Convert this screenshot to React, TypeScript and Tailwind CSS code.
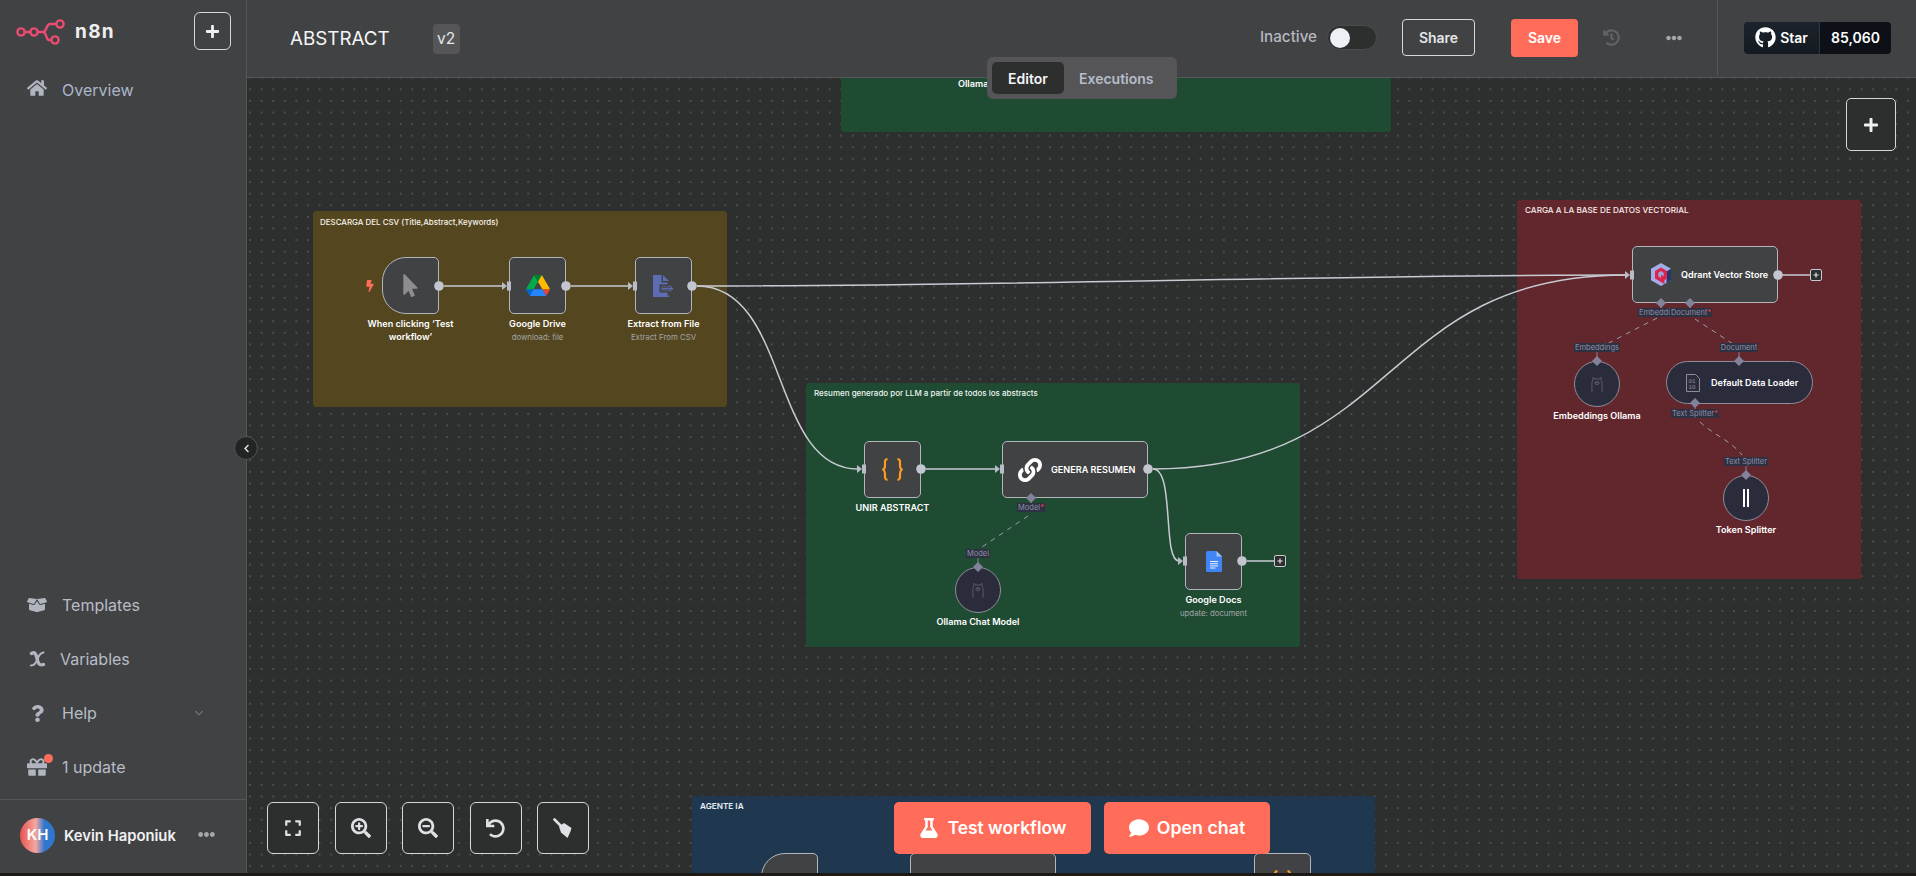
import React from "react";
import {
  FaHome, FaBoxOpen, FaQuestion, FaGift, FaEllipsisH, FaExpand, FaSearchPlus, FaSearchMinus,
  FaUndo, FaFlask, FaComment, FaMousePointer, FaBolt, FaLink, FaHistory, FaPlus, FaGithub, FaChevronLeft,
} from "react-icons/fa";
import { ChevronDown } from "lucide-react";

function Logo() {
  return (
    <svg width="50" height="28" viewBox="15 18 50 28" fill="none" stroke="#ea4b71" strokeWidth="2.4" className="shrink-0">
      <circle cx="21" cy="32" r="3.6" />
      <circle cx="34" cy="32" r="3.6" />
      <circle cx="60" cy="24" r="3.6" />
      <circle cx="55" cy="40" r="3.6" />
      <path d="M24.6 32h5.8M37.6 32h5.4c4 0 3-8 7-8h6.4M43 32c4 0 2.500 8 6 8h2.400" />
    </svg>
  );
}

function VariableIcon() {
  return (
    <svg width="17" height="18" viewBox="0 0 17 18" fill="none" stroke="#b0b5bf" strokeLinecap="round">
      <path d="M2.500 3.500C6 1.500 7 4 8 8.500S10 16 14.500 14.500" strokeWidth="3.400" />
      <path d="M14.500 2.500C11 3 9.500 6 8.500 9S6 15.500 2 15.500" strokeWidth="2.200" />
    </svg>
  );
}

function BroomIcon() {
  return (
    <svg width="20" height="21" viewBox="0 0 20 21" fill="currentColor">
      <path d="M1.500 1.500L8.500 8.500" fill="none" stroke="currentColor" strokeWidth="2.600" strokeLinecap="round" />
      <path d="M6 8.500L11 5L18.500 10L17.500 13.500L14.500 20L8 14.500z" />
    </svg>
  );
}

function DriveIcon() {
  return (
    <svg width="24" height="21" viewBox="0 0 87.300 78">
      <path d="m6.600 66.850 3.850 6.650c.8 1.400 1.950 2.500 3.300 3.300l13.750-23.800h-27.500c0 1.550.4 3.100 1.200 4.500z" fill="#0066da" />
      <path d="m43.650 25-13.750-23.800c-1.350.8-2.500 1.900-3.300 3.300l-25.400 44a9.060 9.060 0 0 0 -1.200 4.500h27.500z" fill="#00ac47" />
      <path d="m73.550 76.800c1.350-.8 2.500-1.900 3.300-3.300l1.600-2.750 7.650-13.250c.8-1.400 1.200-2.950 1.200-4.500h-27.502l5.852 11.500z" fill="#ea4335" />
      <path d="m43.650 25 13.750-23.800c-1.350-.8-2.900-1.200-4.500-1.200h-18.500c-1.600 0-3.150.45-4.500 1.200z" fill="#00832d" />
      <path d="m59.800 53h-32.300l-13.750 23.800c1.350.8 2.900 1.200 4.500 1.200h50.800c1.600 0 3.150-.45 4.500-1.200z" fill="#2684fc" />
      <path d="m73.400 26.500-12.700-22c-.8-1.400-1.950-2.500-3.300-3.300l-13.750 23.800 16.150 28h27.450c0-1.550-.4-3.100-1.200-4.500z" fill="#ffba00" />
    </svg>
  );
}

function ExtractIcon() {
  return (
    <svg width="24" height="22" viewBox="0 0 24 22" className="ml-[1px]">
      <path d="M1 0h8.500v7.500H17V22H1z" fill="#5d6db3" />
      <path d="M11 0L17 6H11z" fill="#5d6db3" />
      <path d="M8.500 10.500H16.500V8L23 13.500 16.500 19V16.500H8.500z" fill="#5d6db3" stroke="#414244" strokeWidth="2" />
      <path d="M10 12.500H19M10 14.700H19" stroke="#414244" strokeWidth="0.8" />
    </svg>
  );
}

function DocsIcon() {
  return (
    <svg width="16" height="21" viewBox="0 0 16 21">
      <path d="M1.500 0H10.500L16 5.500V19.500a1.500 1.500 0 0 1-1.500 1.500h-13A1.500 1.500 0 0 1 0 19.500V1.500A1.500 1.500 0 0 1 1.500 0z" fill="#4285f4" />
      <path d="M10.500 0L16 5.500H10.500z" fill="#a1c2fa" />
      <path d="M4 10.500h8M4 12.700h8M4 14.900h8M4 17h5.500" stroke="#fff" strokeWidth="0.9" />
    </svg>
  );
}

function QdrantIcon() {
  return (
    <svg width="20" height="23" viewBox="0 0 20 23">
      <path d="M10 0L20 5.750V17.250L10 23L0 17.250V5.750z" fill="#a3aee6" />
      <path d="M20 5.750V17.250L15.500 20V8.400z" fill="#24386c" />
      <path d="M4 8L10 4.500L16 8V15.500L13.500 17V21L10 19L4 15.500z" fill="#dc244c" />
      <path d="M7.300 9.700L10 8.100L12.700 9.700V13.300L10 14.900L7.300 13.300z" fill="#9aa6e2" />
      <path d="M10 11.500L12.700 13.300V15.500L10 14.900z" fill="#dc244c" />
    </svg>
  );
}

function OllamaIcon() {
  return (
    <svg width="12" height="16" viewBox="0 0 13 17" fill="none" stroke="#7f808c" strokeWidth="0.6">
      <path d="M1 17V7C1 5.500 2 5 2 4V1.500C3 1.500 3.800 2.500 4 3.300C5.300 2.800 7.700 2.800 9 3.300C9.200 2.500 10 1.500 11 1.500V4C11 5 12 5.500 12 7V17" />
      <path d="M4.300 6.800c1.500-1 3-1 4.400 0c.5 1.500-.8 2.400-2.200 2.400s-2.700-.9-2.200-2.400z" />
      <path d="M5.800 7h1.400l-.7.600z" />
    </svg>
  );
}

function LoaderIcon() {
  return (
    <svg width="14" height="18" viewBox="0 0 14 18" fill="none" stroke="#8b8c98" strokeWidth="1">
      <path d="M.5.500H9.500L13.500 4.500V17.500H.5z" />
      <text x="2.500" y="8.500" fontSize="6" fill="#8b8c98" stroke="none" fontFamily="Liberation Mono, monospace">01</text>
      <text x="2.500" y="15" fontSize="6" fill="#8b8c98" stroke="none" fontFamily="Liberation Mono, monospace">10</text>
    </svg>
  );
}

function BracesIcon() {
  return (
    <svg width="23" height="23" viewBox="0 0 23 23" fill="none" stroke="#ff9b1f" strokeWidth="2.200">
      <path d="M6.500 1.200C3.500 1.200 4 3.500 4 6.500S4 11 1.500 11.500C4 12 4 14 4 16.500S3.500 21.800 6.500 21.800" />
      <path d="M16.500 1.200C19.500 1.200 19 3.500 19 6.500S19 11 21.500 11.500C19 12 19 14 19 16.500S19.500 21.800 16.500 21.800" />
    </svg>
  );
}

function CanvasNode({
  pos,
  shape,
  label,
  sub,
  gap,
  children,
}: {
  pos: string;
  shape: string;
  label?: React.ReactNode;
  sub?: string;
  gap?: string;
  children?: React.ReactNode;
}) {
  return (
    <div className={`absolute flex items-center ${pos} ${shape}`}>
      {children}
      {label && (
        <div className={`absolute left-1/2 top-full w-[110px] -translate-x-1/2 text-center ${gap ?? "mt-[4px]"}`}>
          <div className="text-[9.100px] font-semibold leading-[13px] text-white">{label}</div>
          {sub && <div className="mt-[2px] text-[7.800px] leading-[10px] text-[#a3a6a8]">{sub}</div>}
        </div>
      )}
    </div>
  );
}

function PortLabel({ pos, text, required }: { pos: string; text: string; required?: boolean }) {
  return (
    <div className={`absolute -translate-x-1/2 whitespace-nowrap bg-[#2f3040] px-[1px] text-[7.500px] leading-[9px] text-[#8b90aa] ${pos}`}>
      {text}
      {required && <span className="text-[#f0384a]">*</span>}
    </div>
  );
}

const squareNode = "h-[57px] w-[57px] justify-center rounded-[5px] border-[1.500px] border-[#b3b5bd] bg-[#414244]";
const wideNode = "h-[57px] w-[146px] rounded-[5px] border-[1.500px] border-[#b3b5bd] bg-[#414244]";
const triggerNode = "h-[57px] w-[57px] justify-center rounded-l-[24px] rounded-r-[5px] border-[1.500px] border-[#b3b5bd] bg-[#414244]";
const circleNode = "h-[46px] w-[46px] justify-center rounded-full border border-[#8d8e98] bg-[#2a2c3c]";
const edge = "#c9cbd3";

function Out({ x, y }: { x: number; y: number }) {
  return <circle cx={x} cy={y} r="4.800" fill="#c3c6d0" />;
}
function In({ x, y }: { x: number; y: number }) {
  return (
    <g fill="#b9bcc6">
      <path d={`M${x - 7} ${y - 4}L${x - 2} ${y}L${x - 7} ${y + 4}z`} />
      <rect x={x - 2} y={y - 4.5} width="4" height="9" />
    </g>
  );
}
function Diamond({ x, y }: { x: number; y: number }) {
  return <path d={`M${x} ${y - 5}L${x + 5} ${y}L${x} ${y + 5}L${x - 5} ${y}z`} fill="#82839a" />;
}

function Plus({ pos }: { pos: string }) {
  return (
    <div className={`absolute flex h-[12px] w-[12px] items-center justify-center rounded-[2px] border border-[#c9cbd3] bg-[#2d2e2e] text-[#e6e7ea] ${pos}`}>
      <FaPlus size={6} />
    </div>
  );
}

function SideItem({ icon, text, textClass }: { icon: React.ReactNode; text: string; textClass: string }) {
  return (
    <div className="flex h-[54px] items-center pl-[27px] text-[16px] text-[#b7bcc6]">
      <div className="flex w-[20px] justify-center text-[#b0b5bf]">{icon}</div>
      <span className={textClass}>{text}</span>
    </div>
  );
}

function ZoomBtn({ children }: { children: React.ReactNode }) {
  return (
    <div className="flex h-[52px] w-[52px] items-center justify-center rounded-[6px] border border-[#d6d7da] bg-[#2d2e2e] text-[#dfe0e3]">
      {children}
    </div>
  );
}

export default function App() {
  return (
    <div className="relative flex h-[876px] w-full flex-col overflow-hidden bg-[#1e1a18] font-[Inter,sans-serif]">
      <div className="flex h-[873px] w-full">
        {/* Sidebar */}
        <aside className="flex h-full w-[247px] shrink-0 flex-col border-r border-[#555658] bg-[#414244]">
          <div className="flex h-[63px] items-start pl-[15px]">
            <div className="mt-[18px]">
              <Logo />
            </div>
            <span className="ml-[10px] mt-[19px] text-[19px] font-bold leading-[26px] tracking-[1.300px] text-[#eeeeee]">n8n</span>
            <div className="ml-auto mr-[15px] mt-[12px] flex h-[38px] w-[37px] items-center justify-center rounded-[6px] border border-[#d6d7da] text-[#eef0f3]">
              <FaPlus size={15} />
            </div>
          </div>
          <div className="flex h-[54px] items-center pl-[27px] text-[16px] text-[#adb6c9]">
            <FaHome size={20} className="mb-[5px] text-[#b0b5bf]" />
            <span className="ml-[15px]">Overview</span>
          </div>
          <div className="flex-1" />
          <SideItem icon={<FaBoxOpen size={20} />} text="Templates" textClass="ml-[15px]" />
          <SideItem icon={<VariableIcon />} text="Variables" textClass="ml-[13px]" />
          <div className="relative">
            <SideItem icon={<FaQuestion size={17} />} text="Help" textClass="ml-[15px]" />
            <ChevronDown size={14} strokeWidth={1.500} className="absolute left-[192px] top-[20px] text-[#9a9da3]" />
          </div>
          <div className="relative">
            <SideItem icon={<FaGift size={20} />} text="1 update" textClass="ml-[15px]" />
            <div className="absolute left-[44px] top-[14px] h-[9px] w-[9px] rounded-full bg-[#ff6d5a]" />
          </div>
          <div className="mt-[5px] flex h-[74px] items-center border-t border-[#555658] pl-[20px]">
            <div className="mb-[2px] flex h-[35px] w-[35px] items-center justify-center rounded-full bg-[linear-gradient(90deg,#e9524e,#f4a8a0_45%,#2f76cf_70%)] text-[15px] font-semibold text-white">
              KH
            </div>
            <span className="ml-[9px] text-[14.800px] font-semibold text-[#f0f1f3]">Kevin Haponiuk</span>
            <FaEllipsisH size={17} className="ml-[22px] mb-[4px] text-[#a5a7ac]" />
          </div>
        </aside>

        {/* Main */}
        <main className="flex h-full min-w-0 flex-1 flex-col">
          <header className="relative z-20 flex h-[78px] shrink-0 items-center border-b border-[#555658] bg-[#414244] pl-[43px]">
            <span className="text-[18.800px] leading-[24px] text-[#f4f5f7]">ABSTRACT</span>
            <div className="ml-[43px] flex h-[30px] w-[27px] items-center justify-center rounded-[4px] bg-[#555557] text-[15.500px] text-[#e4e5e8]">v2</div>
            <div className="ml-auto flex h-full items-center pb-[2px]">
              <span className="text-[15.200px] font-medium text-[#b5b8c0]">Inactive</span>
              <div className="ml-[10px] flex h-[25px] w-[50px] items-center rounded-full border border-[#4b4c4e] bg-[#2d2e2e] pl-[2px]">
                <div className="h-[20px] w-[20px] rounded-full bg-[#eef0f6]" />
              </div>
              <div className="ml-[25px] flex h-[37px] w-[73px] items-center justify-center rounded-[4px] border border-[#d6d7da] text-[14px] font-semibold text-[#e4e5e8]">Share</div>
              <div className="ml-[36px] flex h-[38px] w-[67px] items-center justify-center rounded-[4px] bg-[#ff6d5a] text-[14px] font-semibold text-white">Save</div>
              <FaHistory size={17} className="ml-[25px] text-[#626366]" />
              <FaEllipsisH size={16} className="ml-[46px] text-[#a5a7ac]" />
              <div className="ml-[35px] flex h-full w-[199px] items-center border-l border-[#555658] pl-[26px]">
                <div className="flex h-[32px] w-[147px] overflow-hidden rounded-[4px]">
                  <div className="flex w-[76px] items-center justify-center gap-[4px] border-r border-[#30363d] bg-[linear-gradient(180deg,#1c232c,#141a21)] text-[14px] font-semibold text-white">
                    <FaGithub size={21} />
                    Star
                  </div>
                  <div className="flex flex-1 items-center justify-center bg-[#0d1117] text-[14px] font-semibold text-white">85,060</div>
                </div>
              </div>
            </div>
            <div className="absolute left-[740px] top-[57px] z-30 flex h-[42px] w-[190px] items-center rounded-[6px] bg-[#555557] pl-[5px]">
              <div className="flex h-[32px] w-[72px] items-center justify-center rounded-[5px] bg-[#2d2e2e] text-[14px] font-semibold text-[#f4f5f7]">Editor</div>
              <span className="ml-[15px] text-[14px] font-semibold text-[#b7bcc9]">Executions</span>
            </div>
          </header>

          {/* Canvas */}
          <section className="relative min-h-0 flex-1 overflow-hidden bg-[#2d2e2e] bg-[radial-gradient(circle,#5b5c5d_0.6px,transparent_0.85px)] bg-[size:11.600px_11.600px] bg-[position:-2.800px_5.500px]">
            {/* Sticky notes */}
            <div className="absolute left-[594px] top-0 h-[54px] w-[550px] rounded-b-[3px] bg-[#1f4b33]">
              <span className="absolute left-[117px] top-[0px] text-[9.100px] font-semibold leading-[12px] text-white">Ollama</span>
            </div>
            <div className="absolute left-[66px] top-[133px] h-[196px] w-[414px] rounded-[3px] bg-[#54461f] pl-[7px] pt-[6px] text-[7.950px] leading-[11px] font-medium text-[#f4f2e8]">DESCARGA DEL CSV (Title,Abstract,Keywords)</div>
            <div className="absolute left-[559px] top-[305px] h-[264px] w-[494px] rounded-[3px] bg-[#1f4b33] pl-[8px] pt-[5px] text-[8px] leading-[11px] font-medium text-[#eef4f0]">Resumen generado por LLM a partir de todos los abstracts</div>
            <div className="absolute left-[1270px] top-[122px] h-[379px] w-[344px] rounded-[3px] bg-[#62272c] pl-[8px] pt-[5px] text-[8.200px] leading-[11px] font-medium text-[#f6ecec]">CARGA A LA BASE DE DATOS VECTORIAL</div>
            <div className="absolute left-[445px] top-[718px] h-[90px] w-[683px] rounded-[3px] bg-[#1f3850] pl-[8px] pt-[5px] text-[8.200px] leading-[11px] font-semibold text-[#e8eef4]">AGENTE IA</div>

            {/* Edges */}
            <svg className="absolute left-0 top-0 h-[795px] w-[1669px]" viewBox="247 78 1669 795" fill="none">
              <g stroke={edge} strokeWidth="1.500">
                <path d="M444 286H503" />
                <path d="M571 286H630" />
                <path d="M697 286C1000 286 1330 275 1626 275" />
                <path d="M697 286C790 286 770 469 858 469" />
                <path d="M926 469H996" />
                <path d="M1153 469C1400 469 1380 275 1626 275" />
                <path d="M1153 469C1175 469 1162 561 1179 561" />
                <path d="M1247 561H1274" />
                <path d="M1782 275H1810" />
              </g>
              <g stroke="#9b9cae" strokeWidth="1" strokeDasharray="5 5">
                <path d="M1028 516L982 547" />
                <path d="M1657 318L1605 345" />
                <path d="M1695 319L1733 344" />
                <path d="M1700 422C1715 436 1730 440 1742 455" />
              </g>
              <g stroke="#82839a" strokeWidth="1">
                <path d="M1031 498V503" />
                <path d="M978 558V567" />
                <path d="M1661 303V308M1690 303V308M1597 352V361M1739 352V361M1695 403V409M1746 466V475" />
              </g>
            </svg>

            {/* Nodes */}
            <CanvasNode pos="left-[135px] top-[179px]" shape={triggerNode} label="When clicking ‘Test workflow’">
              <FaMousePointer size={23} className="text-[#8d8d8f]" />
              <FaBolt size={12} className="absolute left-[-19px] top-[22px] text-[#ff6d5a]" />
            </CanvasNode>
            <CanvasNode pos="left-[262px] top-[179px]" shape={squareNode} label="Google Drive" sub="download: file">
              <DriveIcon />
            </CanvasNode>
            <CanvasNode pos="left-[388px] top-[179px]" shape={squareNode} label="Extract from File" sub="Extract From CSV">
              <ExtractIcon />
            </CanvasNode>
            <CanvasNode pos="left-[617px] top-[363px]" shape={squareNode} label="UNIR ABSTRACT">
              <BracesIcon />
            </CanvasNode>
            <CanvasNode pos="left-[755px] top-[363px]" shape={`${wideNode} pl-[15px]`}>
              <FaLink size={24} className="text-white" />
              <span className="ml-[9px] whitespace-nowrap text-[9.100px] font-semibold text-white">GENERA RESUMEN</span>
            </CanvasNode>
            <CanvasNode pos="left-[938px] top-[455px]" shape={squareNode} label="Google Docs" sub="update: document">
              <DocsIcon />
            </CanvasNode>
            <CanvasNode pos="left-[708px] top-[489px]" shape={circleNode} gap="mt-[3px]" label="Ollama Chat Model">
              <OllamaIcon />
            </CanvasNode>
            <CanvasNode pos="left-[1385px] top-[168px]" shape={`${wideNode} pl-[18px]`}>
              <QdrantIcon />
              <span className="ml-[10px] whitespace-nowrap text-[9.100px] font-semibold text-white">Qdrant Vector Store</span>
            </CanvasNode>
            <CanvasNode pos="left-[1327px] top-[283px]" shape={circleNode} gap="mt-[3px]" label="Embeddings Ollama">
              <OllamaIcon />
            </CanvasNode>
            <CanvasNode pos="left-[1419px] top-[283px]" shape="h-[43px] w-[147px] rounded-full border border-[#8d8e98] bg-[#2a2c3c] pl-[19px]">
              <LoaderIcon />
              <span className="ml-[11px] whitespace-nowrap text-[9.100px] font-semibold text-white">Default Data Loader</span>
            </CanvasNode>
            <CanvasNode pos="left-[1476px] top-[397px]" shape={circleNode} gap="mt-[3px]" label="Token Splitter">
              <div className="flex h-[18px] gap-[2px]">
                <div className="w-[2px] bg-white" />
                <div className="w-[2px] bg-white" />
              </div>
            </CanvasNode>
            <CanvasNode pos="left-[514px] top-[775px]" shape={triggerNode} />
            <CanvasNode pos="left-[663px] top-[775px]" shape={wideNode} />
            <CanvasNode pos="left-[1007px] top-[775px]" shape={squareNode}>
              <BracesIcon />
            </CanvasNode>

            {/* Ports */}
            <svg className="absolute left-0 top-0 h-[795px] w-[1669px]" viewBox="247 78 1669 795" fill="none">
              <Out x={439} y={286} />
              <In x={509} y={286} />
              <Out x={566} y={286} />
              <In x={635} y={286} />
              <Out x={692} y={286} />
              <In x={864} y={469} />
              <Out x={921} y={469} />
              <In x={1002} y={469} />
              <Out x={1148} y={469} />
              <In x={1185} y={561} />
              <Out x={1242} y={561} />
              <In x={1632} y={275} />
              <Out x={1778} y={275} />
              <Diamond x={1031} y={498} />
              <Diamond x={978} y={567} />
              <Diamond x={1661} y={303} />
              <Diamond x={1690} y={303} />
              <Diamond x={1597} y={361} />
              <Diamond x={1739} y={361} />
              <Diamond x={1695} y={403} />
              <Diamond x={1746} y={475} />
            </svg>

            <PortLabel pos="left-[784px] top-[425px]" text="Model" required />
            <PortLabel pos="left-[731px] top-[471px]" text="Model" />
            <PortLabel pos="left-[1414px] top-[230px]" text="Embeddings" />
            <PortLabel pos="left-[1444px] top-[230px]" text="Document" required />
            <PortLabel pos="left-[1350px] top-[265px]" text="Embeddings" />
            <PortLabel pos="left-[1492px] top-[265px]" text="Document" />
            <PortLabel pos="left-[1448px] top-[331px]" text="Text Splitter" required />
            <PortLabel pos="left-[1499px] top-[379px]" text="Text Splitter" />

            <Plus pos="left-[1027px] top-[477px]" />
            <Plus pos="left-[1563px] top-[191px]" />

            {/* Overlay controls */}
            <div className="absolute left-[1599px] top-[20px] flex h-[53px] w-[50px] items-center justify-center rounded-[5px] border border-[#d6d7da] bg-[#2d2e2e] text-[#eef0f3]">
              <FaPlus size={16} />
            </div>
            <div className="absolute left-[20px] top-[724px] flex gap-[15.500px]">
              <ZoomBtn><FaExpand size={18} /></ZoomBtn>
              <ZoomBtn><FaSearchPlus size={20} /></ZoomBtn>
              <ZoomBtn><FaSearchMinus size={20} /></ZoomBtn>
              <ZoomBtn><FaUndo size={19} /></ZoomBtn>
              <ZoomBtn><BroomIcon /></ZoomBtn>
            </div>
            <div className="absolute left-[647px] top-[724px] z-10 flex gap-[13px]">
              <div className="flex h-[52px] w-[197px] items-center justify-center gap-[9px] rounded-[5px] bg-[#ff6d5a] text-[17.400px] font-semibold text-white">
                <FaFlask size={20} />
                Test workflow
              </div>
              <div className="flex h-[52px] w-[166px] items-center justify-center gap-[8px] rounded-[5px] bg-[#ff6d5a] text-[17.800px] font-semibold text-white">
                <FaComment size={20} />
                Open chat
              </div>
            </div>
          </section>
        </main>
      </div>

      <div className="absolute left-[234px] top-[436px] z-30 flex h-[24px] w-[24px] items-center justify-center rounded-full border border-[#555658] bg-[#232424] text-[#e4e5e8]">
        <FaChevronLeft size={9} />
      </div>
    </div>
  );
}
